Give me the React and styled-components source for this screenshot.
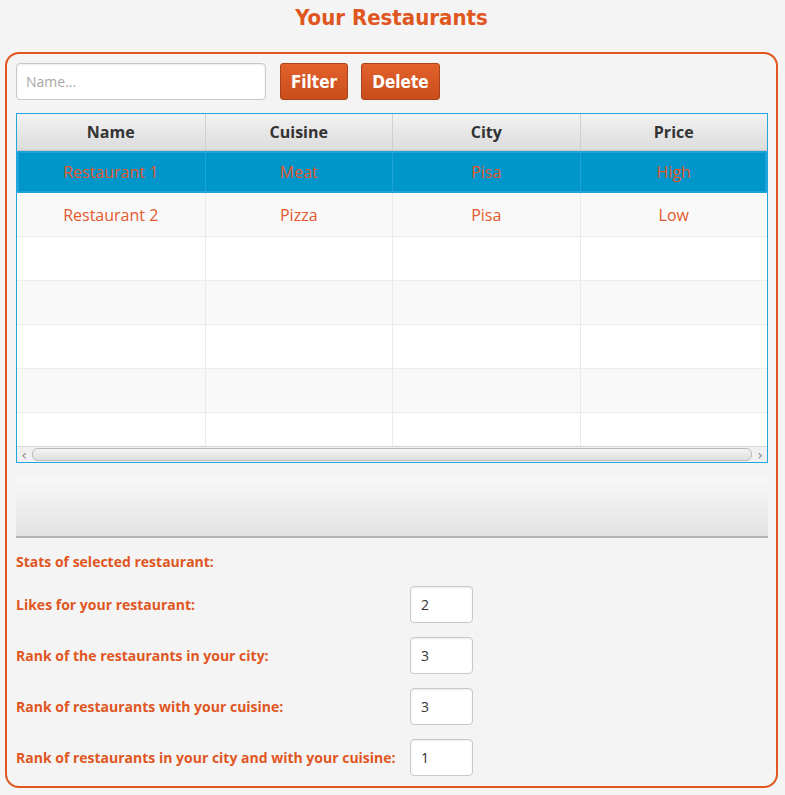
import React from 'react';
import styled, { createGlobalStyle } from 'styled-components';

const GlobalStyle = createGlobalStyle`
  html, body {
    margin: 0;
    padding: 0;
    background: #f4f4f4;
  }
  body {
    font-family: "Open Sans", "Noto Sans", sans-serif;
  }
`;

const ORANGE = '#e0561f';

const Page = styled.div`
  width: 785px;
  height: 795px;
  box-sizing: border-box;
  padding: 4px 7px 0 5px;
  overflow: hidden;
`;

const Title = styled.h1`
  margin: 0;
  height: 48px;
  text-align: center;
  font-family: "DejaVu Sans Condensed", "DejaVu Sans", sans-serif;
  font-weight: bold;
  font-size: 22px;
  line-height: 28px;
  color: ${ORANGE};
`;

const Panel = styled.div`
  box-sizing: border-box;
  width: 773px;
  height: 736px;
  border: 2px solid ${ORANGE};
  border-radius: 14px;
  padding: 9px 9px 0 9px;
`;

const Toolbar = styled.div`
  display: flex;
  align-items: center;
  gap: 13px;
  height: 37px;
`;

const SearchInput = styled.input`
  box-sizing: border-box;
  width: 250px;
  height: 37px;
  margin-right: 1px;
  border: 1px solid #c8c8c8;
  border-radius: 4px;
  background: #fff;
  padding: 0 9px;
  font-family: "Open Sans", sans-serif;
  font-size: 14px;
  color: #333;
  box-shadow: inset 0 1px 2px rgba(0, 0, 0, 0.08);
  &::placeholder {
    color: #a8a8a8;
  }
`;

const Button = styled.button`
  box-sizing: border-box;
  width: ${(p) => p.$w}px;
  height: 37px;
  border: 1px solid #a8431a;
  border-radius: 3px;
  background: linear-gradient(#e2612c, #c94e1c);
  color: #fff;
  font-family: "DejaVu Sans Condensed", "DejaVu Sans", sans-serif;
  font-weight: bold;
  font-size: 17px;
  padding: 0;
`;

const Table = styled.div`
  box-sizing: border-box;
  margin-top: 13px;
  width: 752px;
  height: 350px;
  border: 1px solid #1fa6dc;
  background: #fff;
  display: flex;
  flex-direction: column;
`;

const Row = styled.div`
  display: grid;
  grid-template-columns: repeat(4, 1fr);
  flex: none;
  height: ${(p) => p.$h || 44}px;
  background: ${(p) => (p.$selected ? '#0096c9' : p.$odd ? '#f9f9f9' : '#fff')};
  box-shadow: ${(p) => (p.$selected ? 'inset 0 0 0 2px #1ea3d6' : 'none')};
`;

const HeadRow = styled(Row)`
  height: 37px;
  background: linear-gradient(#f2f2f2, #dcdcdc);
  border-bottom: 1px solid #c8c8c8;
  box-sizing: border-box;
`;

const HeadCell = styled.div`
  display: flex;
  align-items: center;
  justify-content: center;
  font-family: "Open Sans", sans-serif;
  font-weight: bold;
  font-size: 16px;
  color: #333;
  border-left: ${(p) => (p.$first ? 'none' : '1px solid #cfcfcf')};
`;

const Cell = styled.div`
  display: flex;
  align-items: center;
  justify-content: center;
  font-family: "Open Sans", sans-serif;
  font-size: 16px;
  color: #e3582b;
  border-left: ${(p) => (p.$first ? 'none' : `1px solid ${p.$sel ? '#1ea3d6' : '#e9e9e9'}`)};
  border-bottom: 1px solid ${(p) => (p.$sel ? '#1ea3d6' : '#ececec')};
`;

const Body = styled.div`
  flex: 1;
  overflow: hidden;
`;

const ScrollBar = styled.div`
  flex: none;
  height: 16px;
  display: flex;
  align-items: center;
  gap: 4px;
  padding: 0 3px;
  background: #f0f0f0;
  border-top: 1px solid #d6d6d6;
  box-sizing: border-box;
  color: #888;
  font-size: 14px;
`;

const Thumb = styled.div`
  flex: 1;
  height: 11px;
  border: 1px solid #b9b9b9;
  border-radius: 6px;
  background: linear-gradient(#f4f4f4, #dedede);
`;

const Arrow = styled.span`
  width: 8px;
  text-align: center;
  line-height: 14px;
  font-family: "DejaVu Sans", sans-serif;
`;

const Shelf = styled.div`
  box-sizing: border-box;
  margin-top: 14px;
  width: 752px;
  height: 61px;
  background: linear-gradient(#f8f8f8, #e3e3e3);
  border-bottom: 2px solid #b4b4b4;
`;

const StatsTitle = styled.div`
  margin-top: 15px;
  font-family: "Open Sans", sans-serif;
  font-weight: bold;
  font-size: 14px;
  line-height: 18px;
  color: ${ORANGE};
`;

const Stats = styled.div`
  margin-top: 15px;
  display: grid;
  grid-template-columns: 394px 63px;
  row-gap: 14px;
  align-items: center;
`;

const StatLabel = styled.div`
  font-family: "Open Sans", sans-serif;
  font-weight: bold;
  font-size: 14px;
  color: ${ORANGE};
  white-space: nowrap;
`;

const StatBox = styled.div`
  box-sizing: border-box;
  height: 37px;
  border: 1px solid #c8c8c8;
  border-radius: 4px;
  background: #fff;
  padding-left: 10px;
  display: flex;
  align-items: center;
  font-family: "Open Sans", sans-serif;
  font-size: 14px;
  color: #333;
  box-shadow: inset 0 1px 2px rgba(0, 0, 0, 0.08);
`;

const columns = ['Name', 'Cuisine', 'City', 'Price'];

const restaurants = [
  ['Restaurant 1', 'Meat', 'Pisa', 'High'],
  ['Restaurant 2', 'Pizza', 'Pisa', 'Low'],
];

const stats = [
  ['Likes for your restaurant:', '2'],
  ['Rank of the restaurants in your city:', '3'],
  ['Rank of restaurants with your cuisine:', '3'],
  ['Rank of restaurants in your city and with your cuisine:', '1'],
];

export default function App() {
  const rows = [...restaurants];
  while (rows.length < 7) rows.push(['', '', '', '']);

  return (
    <Page>
      <GlobalStyle />
      <Title>Your Restaurants</Title>
      <Panel>
        <Toolbar>
          <SearchInput placeholder="Name..." />
          <Button $w={68}>Filter</Button>
          <Button $w={79}>Delete</Button>
        </Toolbar>

        <Table>
          <HeadRow>
            {columns.map((c, i) => (
              <HeadCell key={c} $first={i === 0}>{c}</HeadCell>
            ))}
          </HeadRow>
          <Body>
            {rows.map((r, idx) => (
              <Row key={idx} $selected={idx === 0} $odd={idx % 2 === 1} $h={idx === 0 ? 42 : 44}>
                {r.map((v, i) => (
                  <Cell key={i} $first={i === 0} $sel={idx === 0}>{v}</Cell>
                ))}
              </Row>
            ))}
          </Body>
          <ScrollBar>
            <Arrow>‹</Arrow>
            <Thumb />
            <Arrow>›</Arrow>
          </ScrollBar>
        </Table>

        <Shelf />

        <StatsTitle>Stats of selected restaurant:</StatsTitle>
        <Stats>
          {stats.map(([label, value]) => (
            <React.Fragment key={label}>
              <StatLabel>{label}</StatLabel>
              <StatBox>{value}</StatBox>
            </React.Fragment>
          ))}
        </Stats>
      </Panel>
    </Page>
  );
}
